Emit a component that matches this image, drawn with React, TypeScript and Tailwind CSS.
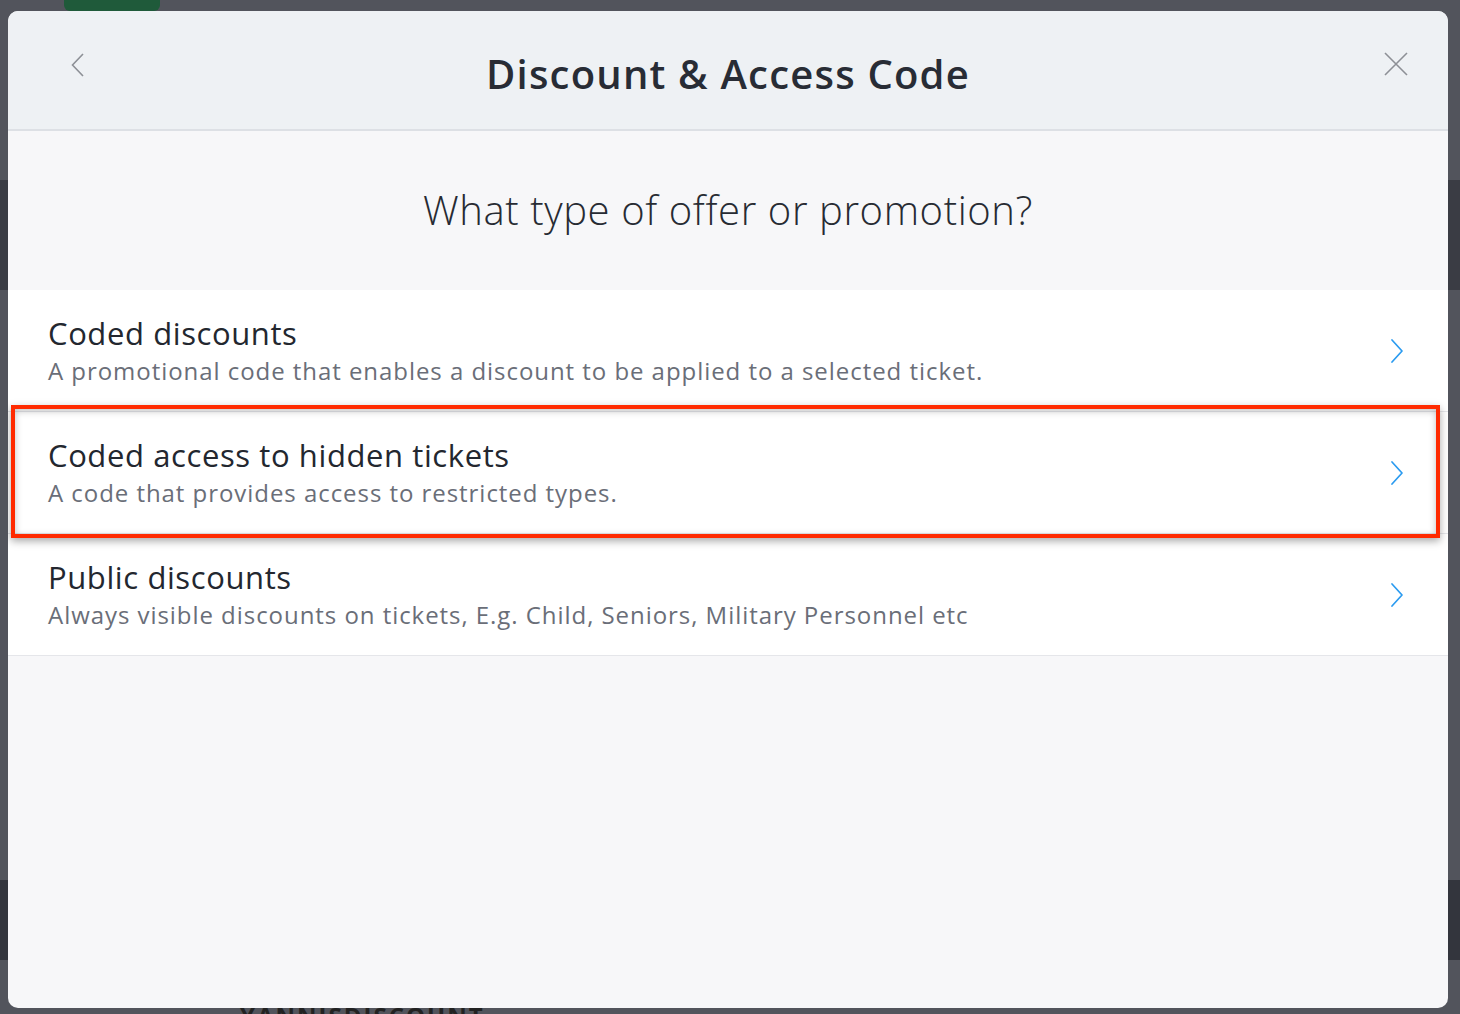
import React from "react";

const Chevron = () => (
  <svg width="14" height="26" viewBox="0 0 14 26" fill="none">
    <path d="M2 2 L12 13 L2 24" stroke="#2b9bf0" strokeWidth="1.7" strokeLinecap="round" strokeLinejoin="round" />
  </svg>
);

const Row = ({ title, desc, highlight }: { title: string; desc: string; highlight?: boolean }) => (
  <div className="relative">
    <div className="flex items-center bg-white pl-[40px] pr-[44px] h-[122px] border-b border-[#e5e6ea]">
      <div className="flex-1">
        <div className="text-[31px] leading-[36px] text-[#23272f] tracking-[0.6px]">{title}</div>
        <div className="text-[24px] leading-[30px] text-[#6a6e78] mt-[5px] tracking-[0.95px]">{desc}</div>
      </div>
      <Chevron />
    </div>
    {highlight && (
      <div className="absolute z-10 left-[3px] right-[8px] top-[-7px] bottom-[-4px] border-[4px] border-[#ff2a00] shadow-[0_3px_8px_rgba(0,0,0,0.35),inset_0_2px_7px_rgba(0,0,0,0.25)] pointer-events-none" />
    )}
  </div>
);

export default function App() {
  return (
    <div
      className="relative w-[1460px] h-[1014px] overflow-hidden bg-[#52545c]"
      style={{ fontFamily: '"Open Sans", "Liberation Sans", sans-serif' }}
    >
      {/* faint background page */}
      <div className="absolute left-[64px] top-[-20px] w-[96px] h-[31px] rounded-[6px] bg-[#1f5a3a]" />
      <div className="absolute left-0 top-[180px] w-full h-[110px] bg-[#3a3c44]" />
      <div className="absolute left-0 top-[880px] w-full h-[80px] bg-[#33353d]" />
      <div className="absolute left-[240px] top-[1004px] text-[#222] text-[24px] leading-[24px] font-bold tracking-[2px]">
        YANNISDISCOUNT
      </div>

      {/* modal */}
      <div className="absolute left-[8px] top-[11px] w-[1440px] h-[997px] rounded-[10px] overflow-hidden bg-[#f7f7f9] flex flex-col">
        <div className="relative h-[120px] bg-[#eef1f4] border-b-[2px] border-[#dde0e5] flex items-center justify-center shrink-0">
          <svg className="absolute left-[63px] top-[42px]" width="14" height="24" viewBox="0 0 14 24" fill="none">
            <path d="M12 1 L1.5 12 L12 23" stroke="#8d9096" strokeWidth="1.6" />
          </svg>
          <div className="text-[40px] font-semibold text-[#282c35] tracking-[1.2px] mt-[8px]">
            Discount &amp; Access Code
          </div>
          <svg className="absolute right-[40px] top-[41px]" width="24" height="24" viewBox="0 0 24 24" fill="none">
            <path d="M1 1 L23 23 M23 1 L1 23" stroke="#8d9096" strokeWidth="1.6" />
          </svg>
        </div>
        <div className="h-[159px] flex items-center justify-center shrink-0">
          <div className="text-[40px] font-light text-[#272b33] tracking-[0.6px] mt-[-2px]">
            What type of offer or promotion?
          </div>
        </div>
        <Row
          title="Coded discounts"
          desc="A promotional code that enables a discount to be applied to a selected ticket."
        />
        <Row
          title="Coded access to hidden tickets"
          desc="A code that provides access to restricted types."
          highlight
        />
        <Row
          title="Public discounts"
          desc="Always visible discounts on tickets, E.g. Child, Seniors, Military Personnel etc"
        />
      </div>
    </div>
  );
}
